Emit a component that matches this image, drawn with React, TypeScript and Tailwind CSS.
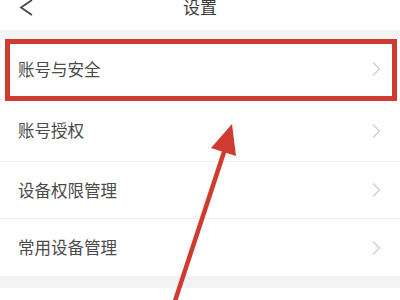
const rows = [
  { label: '账号与安全', h: 'h-[61px]' },
  { label: '账号授权', h: 'h-[62px]' },
  { label: '设备权限管理', h: 'h-[57px]' },
  { label: '常用设备管理', h: 'h-[57px]' },
];

const RightChevron = () => (
  <svg width="10" height="16" viewBox="0 0 10 16" fill="none" className="shrink-0">
    <path d="M2 1.5 L8.5 8 L2 14.5" stroke="#cfcfcf" strokeWidth="1.3" />
  </svg>
);

export default function App() {
  return (
    <div
      className="relative w-[400px] h-[300px] overflow-hidden bg-white"
      style={{ fontFamily: '"Noto Sans CJK SC", "Noto Sans", sans-serif' }}
    >
      {/* Header */}
      <div className="relative h-[30px] flex justify-center">
        <svg className="absolute left-[18px] -top-[1px]" width="16" height="18" viewBox="0 0 16 18" fill="none">
          <path d="M14 1 L3 8.5 L14 16" stroke="#474747" strokeWidth="1.8" />
        </svg>
        <h1 className="-mt-[3px] text-[17px] leading-[20px] text-[#3c3c3c]">设置</h1>
      </div>
      <div className="h-[9px] bg-[#f4f4f4]" />

      {/* List */}
      <div className="flex flex-col">
        {rows.map((row, i) => (
          <div
            key={row.label}
            className={`${row.h} flex items-center justify-between pl-[18px] pr-[19px] ${
              i < rows.length - 1 ? 'border-b border-[#efefef]' : ''
            }`}
          >
            <span className="text-[16.5px] text-[#4a4a4a]">{row.label}</span>
            <RightChevron />
          </div>
        ))}
      </div>
      <div className="h-[12px] bg-[#f3f3f3]" />

      {/* Annotations */}
      <div className="absolute left-[5px] top-[39px] w-[392px] h-[62px] border-[5px] border-[#cf3b30]" />
      <svg className="absolute inset-0" width="400" height="300" viewBox="0 0 400 300">
        <line x1="172" y1="310" x2="226" y2="146" stroke="#cf3b30" strokeWidth="4.5" />
        <polygon points="232,124 236,156 211,148" fill="#cf3b30" />
      </svg>
    </div>
  );
}
